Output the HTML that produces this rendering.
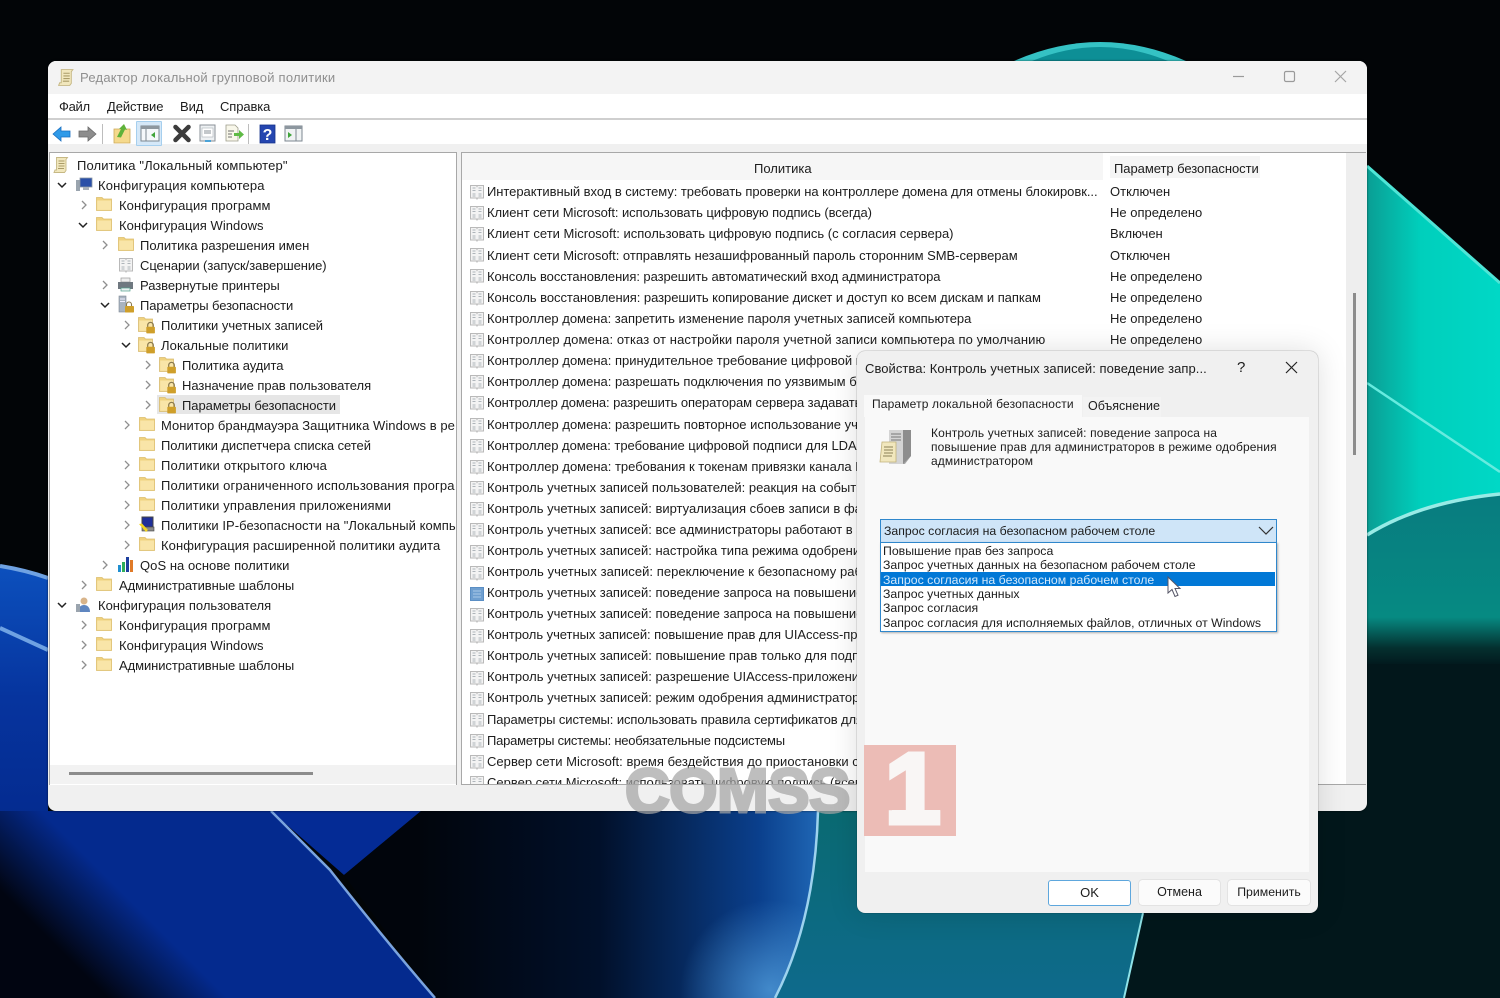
<!DOCTYPE html>
<html lang="ru"><head><meta charset="utf-8"><title>Редактор локальной групповой политики</title>
<style>
html,body{margin:0;padding:0;background:#020507}
body{width:1500px;height:998px;position:relative;overflow:hidden;font:13px/20px "Liberation Sans",sans-serif;color:#1c1c1c}
.a,.a>*{position:absolute}
.t{position:absolute;white-space:nowrap;height:20px;line-height:20px}
.i{position:absolute;width:16px;height:16px}
.c{position:absolute;width:10px;height:10px}
.s{font-size:12.300px}
</style></head><body>
<svg width="0" height="0" style="position:absolute">
<defs>
<symbol id="fo" viewBox="0 0 16 16"><path d="M.5 14.500V1.500h5.500l1.500 1.500h8v11.500z" fill="#f0d27f" stroke="#dcbd6c" stroke-width=".8"/><path d="M1.200 4.500h13.800v9.400H1.200z" fill="#f9e5a8"/></symbol>
<symbol id="lk" viewBox="0 0 18 18"><path d="M.5 15.500V1.500h5.500l1.500 1.500h7v12.500z" fill="#f0d27f" stroke="#d8bc72" stroke-width=".8"/><path d="M1.200 4.500h12.800v10.300H1.200z" fill="#f9e5a8"/><path d="M9.700 11V9.200a2.800 2.800 0 0 1 5.600 0V11" fill="none" stroke="#8a7a50" stroke-width="1.200"/><rect x="8.300" y="10.800" width="8.600" height="6.600" rx=".8" fill="#cf9f2a"/></symbol>
<symbol id="chr" viewBox="0 0 10 10"><path d="M3 1l4 4-4 4" fill="none" stroke="#8f8f8f" stroke-width="1.300"/></symbol>
<symbol id="chd" viewBox="0 0 10 10"><path d="M1 3l4 4 4-4" fill="none" stroke="#222" stroke-width="1.500"/></symbol>
<symbol id="pg" viewBox="0 0 16 16"><path d="M1.500 1.500h6l.5 1 .5-1h6v12.500h-6l-.5 1-.5-1h-6z" fill="#f3f3f3" stroke="#b9b9b9"/><path d="M3.500 4h3M3.500 6.500h3M9.500 4h3M9.500 6.500h3M3.500 10h3M9.500 10h3M3.500 12h3M9.500 12h3" stroke="#aeb4ba" stroke-width="1.100"/></symbol>
<symbol id="pb" viewBox="0 0 16 16"><path d="M1.500 1.500h13v13h-13z" fill="#6f9fd0" stroke="#5a8ec4"/><path d="M4 5h8M4 8h8M4 11h8" stroke="#a8c8e8"/></symbol>
<symbol id="sc" viewBox="0 0 16 18"><path d="M4 1.500h11l-1.500 2v11l-1.500 2H1.500l1-2.500h1.500z" fill="#f1e7bd" stroke="#c6b884" stroke-width=".9"/><path d="M6 5h6M6 7.500h6M6 10h6M5.500 12.500h6" stroke="#a99b68"/></symbol>
</defs></svg>

<!-- wallpaper -->
<svg class="a" style="left:0;top:0" width="1500" height="998" viewBox="0 0 1500 998">
<defs>
<linearGradient id="gT" x1="1367" y1="0" x2="1500" y2="0" gradientUnits="userSpaceOnUse"><stop offset="0" stop-color="#0a9e94"/><stop offset=".4" stop-color="#00cfbc"/><stop offset="1" stop-color="#00d8c6"/></linearGradient>
<linearGradient id="gD" x1="0" y1="494" x2="0" y2="665" gradientUnits="userSpaceOnUse"><stop offset="0" stop-color="#087c80"/><stop offset=".72" stop-color="#068a82"/><stop offset=".9" stop-color="#04302f"/><stop offset="1" stop-color="#02191d"/></linearGradient>
<linearGradient id="gB" x1="30" y1="920" x2="90" y2="860" gradientUnits="userSpaceOnUse"><stop offset="0" stop-color="#010511"/><stop offset="1" stop-color="#042a8e"/></linearGradient>
<linearGradient id="gM" x1="420" y1="0" x2="818" y2="0" gradientUnits="userSpaceOnUse"><stop offset="0" stop-color="#01050c"/><stop offset=".45" stop-color="#01102a"/><stop offset=".85" stop-color="#0a3f8c"/><stop offset="1" stop-color="#1f66b4"/></linearGradient>
<linearGradient id="gL" x1="0" y1="566" x2="0" y2="830" gradientUnits="userSpaceOnUse"><stop offset="0" stop-color="#0c50bd"/><stop offset=".5" stop-color="#06349e"/><stop offset="1" stop-color="#042a8e"/></linearGradient>
<linearGradient id="gC" x1="0" y1="811" x2="0" y2="998" gradientUnits="userSpaceOnUse"><stop offset="0" stop-color="#0a6a72"/><stop offset="1" stop-color="#0e6a8c"/></linearGradient>
<radialGradient id="gP" cx="770" cy="990" r="90" gradientUnits="userSpaceOnUse"><stop offset="0" stop-color="#4f9ad8" stop-opacity=".8"/><stop offset="1" stop-color="#4f9ad8" stop-opacity="0"/></radialGradient>
</defs>
<rect width="1500" height="998" fill="#020507"/>
<rect y="640" x="900" width="600" height="358" fill="#02171b"/>
<path d="M1014 61Q1100 23 1186 61z" fill="#35c2c4"/>
<path d="M1032 61Q1100 33 1168 61z" fill="#0d8f96"/>
<path d="M1367 166L1500 283V998H1367z" fill="url(#gT)"/>
<path d="M1367 535Q1420 502 1500 494V680H1367z" fill="url(#gD)"/>
<rect x="1367" y="664" width="133" height="334" fill="#02171b"/>
<path d="M1367 166L1500 283" stroke="#4fe5d6" stroke-width="3" fill="none"/>
<path d="M1367 383L1500 472" stroke="#66ebdf" stroke-width="2.500" fill="none"/>
<path d="M1367 535Q1420 502 1500 494" stroke="#98ebe6" stroke-width="3.500" fill="none"/>
<path d="M0 566L48 578V820H0z" fill="url(#gL)"/>
<path d="M0 566Q25 570 48 578" stroke="#6fa2e2" stroke-width="4" fill="none"/>
<path d="M0 628L48 650" stroke="#6fa2e2" stroke-width="4" fill="none"/>
<path d="M0 811H271L330 870L435 998H0z" fill="url(#gB)"/>
<path d="M271 811H421L344 875z" fill="#042b95"/>
<path d="M344 875L421 811H818Q815 920 775 998H435z" fill="url(#gM)"/>
<path d="M344 875L421 811H818Q815 920 775 998H435z" fill="url(#gP)"/>
<path d="M818 811Q815 920 775 998H1124L1143 913H1100V811z" fill="url(#gC)"/>
<path d="M271 811L330 870Q385 940 435 998" stroke="#7aa3de" stroke-width="2.500" fill="none"/>
<path d="M818 811Q815 920 775 998" stroke="#9dd2ee" stroke-width="2.500" fill="none"/>
<path d="M1143 913L1124 998" stroke="#8fe3e8" stroke-width="2" fill="none"/>
</svg>

<!-- main window -->
<div class="a" style="left:48px;top:61px;width:1319px;height:750px;background:#f0f0f0;border-radius:8px;overflow:hidden;box-shadow:0 0 2px rgba(0,0,0,.6)"></div>
<div class="a" style="left:48px;top:61px;width:1319px;height:33px;background:#f3f3f3;border-radius:8px 8px 0 0"></div>
<svg class="i" style="left:57px;top:68px;width:17px;height:19px"><use href="#sc"/></svg>
<div class="t" style="left:80px;top:68px;color:#8f8f8f;letter-spacing:.23px">Редактор локальной групповой политики</div>
<svg class="a" style="left:1225px;top:66px" width="130" height="20"><path d="M8 10.500h11" stroke="#9a9a9a" stroke-width="1.200"/><rect x="59.500" y="5.500" width="10" height="10" rx="1.500" fill="none" stroke="#9a9a9a" stroke-width="1.200"/><path d="M110 5l11 11M121 5l-11 11" stroke="#a5a5a5" stroke-width="1.200"/></svg>

<div class="a" style="left:48px;top:94px;width:1319px;height:24px;background:#fff"></div>
<div class="t" style="left:59px;top:97px;letter-spacing:-.3px">Файл</div>
<div class="t" style="left:107px;top:97px;letter-spacing:-.1px">Действие</div>
<div class="t" style="left:180px;top:97px;letter-spacing:-.1px">Вид</div>
<div class="t" style="left:220px;top:97px;letter-spacing:-.1px">Справка</div>
<div class="a" style="left:48px;top:118px;width:1319px;height:2px;background:#cfcfcf"></div>
<div class="a" style="left:48px;top:120px;width:1319px;height:24px;background:#fff"></div>

<!-- toolbar -->
<div class="a" style="left:136px;top:121px;width:24px;height:23px;background:#d5e8f8;border:1px solid #a6cfee;border-radius:1px"></div>
<svg class="a" style="left:50px;top:120px" width="260" height="26" viewBox="0 0 260 26">
<path d="M3 14l8-7v4h9v6h-9v4z" fill="#2f9ae8" stroke="#1a6fc0" stroke-width=".8"/>
<path d="M46 14l-8-7v4h-9v6h9v4z" fill="#8d8d8d" stroke="#6a6a6a" stroke-width=".8"/>
<path d="M52.500 4v20" stroke="#bdbdbd"/>
<path d="M64 9h16v14H64z" fill="#f5d98c" stroke="#cba95a" stroke-width=".8"/>
<path d="M67 17l4-8-2 0 5-5 3 6-2-.5-4 8z" fill="#5fb23a"/>
<rect x="91" y="6" width="18" height="15" fill="#f4f8fb" stroke="#7d8790"/><rect x="91" y="6" width="18" height="3" fill="#8d979f"/><path d="M96 9v12" stroke="#7d8790"/><path d="M105 12v6l-4-3z" fill="#3fa43a"/>
<path d="M125.500 7l13 13M138.500 7l-13 13" stroke="#3c3c3c" stroke-width="4.500" stroke-linecap="round"/>
<rect x="150" y="5" width="15" height="16" fill="#eef1f3" stroke="#8a9097"/><rect x="152" y="8" width="11" height="9" fill="#fff" stroke="#a8b0b6" stroke-width=".6"/><path d="M154 11h7M154 13h7" stroke="#8a9097"/><rect x="155" y="20" width="6" height="2" fill="#4aa3d8"/>
<path d="M176 5h9l3 3v13h-12z" fill="#f8f7ea" stroke="#9c9c8a" stroke-width=".8"/><path d="M178 11h6M178 14h4M178 17h4" stroke="#6f6f6f"/><path d="M184 13h5v-3l5 4.500-5 4.500v-3h-5z" fill="#5fba45"/>
<path d="M198.500 4v20" stroke="#bdbdbd"/>
<rect x="210" y="5" width="15" height="18" fill="#2546b0" stroke="#15318a" stroke-width=".8"/>
<text x="217.500" y="20" text-anchor="middle" font-family="Liberation Sans" font-weight="700" font-size="16" fill="#fff">?</text>
<rect x="235" y="6" width="17" height="15" fill="#f0f3f4" stroke="#7d8790"/><rect x="235" y="6" width="17" height="3" fill="#8d979f"/><path d="M246 9v12" stroke="#7d8790"/><path d="M238 12v6l4-3z" fill="#3fa43a"/>
</svg>

<!-- left tree -->
<div class="a" style="left:49px;top:152px;width:406px;height:632px;background:#fff;border:1px solid #a8a8a8;border-bottom:0;overflow:hidden"></div>
<div class="a" style="left:50px;top:765px;width:406px;height:19px;background:#f2f2f2"></div>
<div class="a" style="left:69px;top:772px;width:244px;height:3px;background:#8c8c8c"></div>
<div class="a" style="left:157px;top:395px;width:183px;height:19px;background:#e6e6e6"></div>

<div class="a" id="tree" style="left:0;top:0;width:456px;height:700px;overflow:hidden">
<svg class="i" style="left:52px;top:156px;width:17px;height:18px"><use href="#sc"/></svg><div class="t" style="left:77px;top:156px;letter-spacing:.13px">Политика "Локальный компьютер"</div>
<svg class="c" style="left:57px;top:180px"><use href="#chd"/></svg>
<svg class="i" style="left:75px;top:176px;width:18px;height:17px" viewBox="0 0 18 17"><rect x="1" y="4" width="4" height="11" fill="#9aa4ae"/><rect x="5" y="2" width="12" height="9" fill="#2a4fa8" stroke="#8a96a3" stroke-width=".8"/><rect x="8" y="11" width="6" height="3" fill="#a8b0ba"/></svg>
<div class="t" style="left:98px;top:176px;letter-spacing:.13px">Конфигурация компьютера</div>

<svg class="c" style="left:79px;top:200px"><use href="#chr"/></svg><svg class="i" style="left:96px;top:196px"><use href="#fo"/></svg><div class="t" style="left:119px;top:196px;letter-spacing:.1px">Конфигурация программ</div>
<svg class="c" style="left:78px;top:220px"><use href="#chd"/></svg><svg class="i" style="left:96px;top:216px"><use href="#fo"/></svg><div class="t" style="left:119px;top:216px;letter-spacing:.05px">Конфигурация Windows</div>
<svg class="c" style="left:100px;top:240px"><use href="#chr"/></svg><svg class="i" style="left:118px;top:236px"><use href="#fo"/></svg><div class="t" style="left:140px;top:236px">Политика разрешения имен</div>
<svg class="i" style="left:118px;top:257px"><use href="#pg"/></svg><div class="t" style="left:140px;top:256px;letter-spacing:-.07px">Сценарии (запуск/завершение)</div>
<svg class="c" style="left:100px;top:280px"><use href="#chr"/></svg>
<svg class="i" style="left:117px;top:277px;width:17px;height:16px" viewBox="0 0 17 16"><rect x="4" y="1" width="9" height="4" fill="#eee" stroke="#999" stroke-width=".7"/><rect x="1" y="5" width="15" height="7" fill="#6f7880"/><rect x="4" y="11" width="9" height="3" fill="#e8f0f0" stroke="#52a08c" stroke-width=".7"/></svg>
<div class="t" style="left:140px;top:276px;letter-spacing:-.05px">Развернутые принтеры</div>
<svg class="c" style="left:100px;top:300px"><use href="#chd"/></svg>
<svg class="i" style="left:118px;top:295px;width:17px;height:18px" viewBox="0 0 17 18"><rect x="1" y="1" width="7" height="16" fill="#a9b4c0" stroke="#7c8894" stroke-width=".6"/><path d="M2 4h5M2 6.500h5" stroke="#eef" stroke-width="1"/><path d="M8.500 11V9.500a2.500 2.500 0 0 1 5 0V11" fill="none" stroke="#8a7a50" stroke-width="1.100"/><rect x="7" y="11" width="9" height="6.500" rx=".8" fill="#cf9f2a"/></svg>
<div class="t" style="left:140px;top:296px;letter-spacing:-.09px">Параметры безопасности</div>

<svg class="c" style="left:122px;top:320px"><use href="#chr"/></svg><svg class="i" style="left:138px;top:316px;width:18px;height:18px"><use href="#lk"/></svg><div class="t" style="left:161px;top:316px">Политики учетных записей</div>
<svg class="c" style="left:121px;top:340px"><use href="#chd"/></svg><svg class="i" style="left:138px;top:336px;width:18px;height:18px"><use href="#lk"/></svg><div class="t" style="left:161px;top:336px;letter-spacing:.1px">Локальные политики</div>
<svg class="c" style="left:143px;top:360px"><use href="#chr"/></svg><svg class="i" style="left:159px;top:356px;width:18px;height:18px"><use href="#lk"/></svg><div class="t" style="left:182px;top:356px;letter-spacing:-.05px">Политика аудита</div>
<svg class="c" style="left:143px;top:380px"><use href="#chr"/></svg><svg class="i" style="left:159px;top:376px;width:18px;height:18px"><use href="#lk"/></svg><div class="t" style="left:182px;top:376px;letter-spacing:-.04px">Назначение прав пользователя</div>
<svg class="c" style="left:143px;top:400px"><use href="#chr"/></svg><svg class="i" style="left:159px;top:396px;width:18px;height:18px"><use href="#lk"/></svg><div class="t" style="left:182px;top:396px;letter-spacing:-.05px">Параметры безопасности</div>

<svg class="c" style="left:122px;top:420px"><use href="#chr"/></svg><svg class="i" style="left:139px;top:416px"><use href="#fo"/></svg><div class="t" style="left:161px;top:416px;letter-spacing:.05px">Монитор брандмауэра Защитника Windows в ре</div>
<svg class="i" style="left:139px;top:436px"><use href="#fo"/></svg><div class="t" style="left:161px;top:436px;letter-spacing:-.06px">Политики диспетчера списка сетей</div>
<svg class="c" style="left:122px;top:460px"><use href="#chr"/></svg><svg class="i" style="left:139px;top:456px"><use href="#fo"/></svg><div class="t" style="left:161px;top:456px;letter-spacing:.2px">Политики открытого ключа</div>
<svg class="c" style="left:122px;top:480px"><use href="#chr"/></svg><svg class="i" style="left:139px;top:476px"><use href="#fo"/></svg><div class="t" style="left:161px;top:476px;letter-spacing:.14px">Политики ограниченного использования програ</div>
<svg class="c" style="left:122px;top:500px"><use href="#chr"/></svg><svg class="i" style="left:139px;top:496px"><use href="#fo"/></svg><div class="t" style="left:161px;top:496px;letter-spacing:.15px">Политики управления приложениями</div>
<svg class="c" style="left:122px;top:520px"><use href="#chr"/></svg>
<svg class="i" style="left:138px;top:516px;width:17px;height:17px" viewBox="0 0 17 17"><rect x="4" y="1" width="11" height="10" fill="#1f2f9a" stroke="#444" stroke-width="1"/><rect x="4" y="11" width="12" height="4" fill="#8a8a8a" stroke="#444" stroke-width=".6"/><path d="M1 8l3-.5L10 14l-2 2z" fill="#f2d41f"/></svg>
<div class="t" style="left:161px;top:516px;letter-spacing:.05px">Политики IP-безопасности на "Локальный компь</div>
<svg class="c" style="left:122px;top:540px"><use href="#chr"/></svg><svg class="i" style="left:139px;top:536px"><use href="#fo"/></svg><div class="t" style="left:161px;top:536px;letter-spacing:.08px">Конфигурация расширенной политики аудита</div>
<svg class="c" style="left:100px;top:560px"><use href="#chr"/></svg>
<svg class="i" style="left:117px;top:556px;width:18px;height:17px" viewBox="0 0 18 17"><rect x="1" y="9" width="3" height="7" fill="#1f8fd0"/><rect x="5" y="6" width="3" height="10" fill="#2fae5a"/><rect x="9" y="1" width="3" height="15" fill="#1d3f9e"/><rect x="13" y="4" width="3" height="12" fill="#e07a28"/></svg>
<div class="t" style="left:140px;top:556px;letter-spacing:.05px">QoS на основе политики</div>
<svg class="c" style="left:79px;top:580px"><use href="#chr"/></svg><svg class="i" style="left:96px;top:576px"><use href="#fo"/></svg><div class="t" style="left:119px;top:576px;letter-spacing:-.08px">Административные шаблоны</div>
<svg class="c" style="left:57px;top:600px"><use href="#chd"/></svg>
<svg class="i" style="left:75px;top:596px;width:18px;height:17px" viewBox="0 0 18 17"><circle cx="9" cy="5" r="3.500" fill="#d8b48a"/><path d="M3 16c0-5 3-7 6-7s6 2 6 7z" fill="#5f86c0"/><rect x="1" y="8" width="4" height="8" fill="#9aa4ae"/></svg>
<div class="t" style="left:98px;top:596px">Конфигурация пользователя</div>
<svg class="c" style="left:79px;top:620px"><use href="#chr"/></svg><svg class="i" style="left:96px;top:616px"><use href="#fo"/></svg><div class="t" style="left:119px;top:616px;letter-spacing:.1px">Конфигурация программ</div>
<svg class="c" style="left:79px;top:640px"><use href="#chr"/></svg><svg class="i" style="left:96px;top:636px"><use href="#fo"/></svg><div class="t" style="left:119px;top:636px;letter-spacing:.05px">Конфигурация Windows</div>
<svg class="c" style="left:79px;top:660px"><use href="#chr"/></svg><svg class="i" style="left:96px;top:656px"><use href="#fo"/></svg><div class="t" style="left:119px;top:656px;letter-spacing:-.08px">Административные шаблоны</div>
</div>

<!-- right list -->
<div class="a" style="left:461px;top:152px;width:905px;height:633px;background:#fff;border:1px solid #a8a8a8;border-right:0;border-bottom:0;box-sizing:border-box;overflow:hidden"></div>
<div class="a" style="left:462px;top:153px;width:641px;height:27px;background:#f6f6f6"></div>
<div class="a" style="left:1110px;top:156px;width:150px;height:22px;background:#f5f5f5"></div>
<div class="t" style="left:754px;top:159px">Политика</div>
<div class="t" style="left:1114px;top:159px;letter-spacing:-.05px">Параметр безопасности</div>
<div class="a" style="left:1346px;top:153px;width:20px;height:632px;background:#eeeeee"></div>
<div class="a" style="left:1353px;top:293px;width:3px;height:162px;background:#8c8c8c"></div>

<div class="a" id="list" style="left:462px;top:182px;width:884px;height:603px;overflow:hidden">
<svg class="i" style="left:7px;top:2px"><use href="#pg"/></svg><div class="t" style="left:25px;top:0px;letter-spacing:-.05px">Интерактивный вход в систему: требовать проверки на контроллере домена для отмены блокировк...</div><div class="t" style="left:648px;top:0px">Отключен</div>
<svg class="i" style="left:7px;top:23px"><use href="#pg"/></svg><div class="t" style="left:25px;top:21px;letter-spacing:-.065px">Клиент сети Microsoft: использовать цифровую подпись (всегда)</div><div class="t" style="left:648px;top:21px">Не определено</div>
<svg class="i" style="left:7px;top:44px"><use href="#pg"/></svg><div class="t" style="left:25px;top:42px">Клиент сети Microsoft: использовать цифровую подпись (с согласия сервера)</div><div class="t" style="left:648px;top:42px">Включен</div>
<svg class="i" style="left:7px;top:65px"><use href="#pg"/></svg><div class="t" style="left:25px;top:64px;letter-spacing:-.025px">Клиент сети Microsoft: отправлять незашифрованный пароль сторонним SMB-серверам</div><div class="t" style="left:648px;top:64px">Отключен</div>
<svg class="i" style="left:7px;top:86px"><use href="#pg"/></svg><div class="t" style="left:25px;top:85px;letter-spacing:-.07px">Консоль восстановления: разрешить автоматический вход администратора</div><div class="t" style="left:648px;top:85px">Не определено</div>
<svg class="i" style="left:7px;top:108px"><use href="#pg"/></svg><div class="t" style="left:25px;top:106px;letter-spacing:-.05px">Консоль восстановления: разрешить копирование дискет и доступ ко всем дискам и папкам</div><div class="t" style="left:648px;top:106px">Не определено</div>
<svg class="i" style="left:7px;top:129px"><use href="#pg"/></svg><div class="t" style="left:25px;top:127px;letter-spacing:-.01px">Контроллер домена: запретить изменение пароля учетных записей компьютера</div><div class="t" style="left:648px;top:127px">Не определено</div>
<svg class="i" style="left:7px;top:150px"><use href="#pg"/></svg><div class="t" style="left:25px;top:148px;letter-spacing:.1px">Контроллер домена: отказ от настройки пароля учетной записи компьютера по умолчанию</div><div class="t" style="left:648px;top:148px">Не определено</div>
<svg class="i" style="left:7px;top:171px"><use href="#pg"/></svg><div class="t" style="left:25px;top:169px">Контроллер домена: принудительное требование цифровой подписи</div>
<svg class="i" style="left:7px;top:192px"><use href="#pg"/></svg><div class="t" style="left:25px;top:190px">Контроллер домена: разрешать подключения по уязвимым безопасным каналам</div>
<svg class="i" style="left:7px;top:213px"><use href="#pg"/></svg><div class="t" style="left:25px;top:211px;letter-spacing:-.1px">Контроллер домена: разрешить операторам сервера задавать задания</div>
<svg class="i" style="left:7px;top:235px"><use href="#pg"/></svg><div class="t" style="left:25px;top:233px">Контроллер домена: разрешить повторное использование учетной записи</div>
<svg class="i" style="left:7px;top:256px"><use href="#pg"/></svg><div class="t" style="left:25px;top:254px;letter-spacing:-.03px">Контроллер домена: требование цифровой подписи для LDAP-сервера</div>
<svg class="i" style="left:7px;top:277px"><use href="#pg"/></svg><div class="t" style="left:25px;top:275px">Контроллер домена: требования к токенам привязки канала LDAP-сервера</div>
<svg class="i" style="left:7px;top:298px"><use href="#pg"/></svg><div class="t" style="left:25px;top:296px">Контроль учетных записей пользователей: реакция на события</div>
<svg class="i" style="left:7px;top:319px"><use href="#pg"/></svg><div class="t" style="left:25px;top:317px">Контроль учетных записей: виртуализация сбоев записи в файл</div>
<svg class="i" style="left:7px;top:340px"><use href="#pg"/></svg><div class="t" style="left:25px;top:338px">Контроль учетных записей: все администраторы работают в режиме</div>
<svg class="i" style="left:7px;top:362px"><use href="#pg"/></svg><div class="t" style="left:25px;top:359px">Контроль учетных записей: настройка типа режима одобрения</div>
<svg class="i" style="left:7px;top:383px"><use href="#pg"/></svg><div class="t" style="left:25px;top:380px;letter-spacing:.05px">Контроль учетных записей: переключение к безопасному рабочему столу</div>
<svg class="i" style="left:7px;top:404px"><use href="#pb"/></svg><div class="t" style="left:25px;top:401px">Контроль учетных записей: поведение запроса на повышение прав</div>
<svg class="i" style="left:7px;top:425px"><use href="#pg"/></svg><div class="t" style="left:25px;top:422px">Контроль учетных записей: поведение запроса на повышение прав</div>
<svg class="i" style="left:7px;top:446px"><use href="#pg"/></svg><div class="t" style="left:25px;top:443px;letter-spacing:-.05px">Контроль учетных записей: повышение прав для UIAccess-приложений</div>
<svg class="i" style="left:7px;top:467px"><use href="#pg"/></svg><div class="t" style="left:25px;top:464px">Контроль учетных записей: повышение прав только для подписанных</div>
<svg class="i" style="left:7px;top:488px"><use href="#pg"/></svg><div class="t" style="left:25px;top:485px">Контроль учетных записей: разрешение UIAccess-приложениям</div>
<svg class="i" style="left:7px;top:509px"><use href="#pg"/></svg><div class="t" style="left:25px;top:506px">Контроль учетных записей: режим одобрения администратором</div>
<svg class="i" style="left:7px;top:530px"><use href="#pg"/></svg><div class="t" style="left:25px;top:528px;letter-spacing:-.1px">Параметры системы: использовать правила сертификатов для</div>
<svg class="i" style="left:7px;top:551px"><use href="#pg"/></svg><div class="t" style="left:25px;top:549px;letter-spacing:-.23px">Параметры системы: необязательные подсистемы</div>
<svg class="i" style="left:7px;top:572px"><use href="#pg"/></svg><div class="t" style="left:25px;top:570px;letter-spacing:.03px">Сервер сети Microsoft: время бездействия до приостановки сеанса</div>
<svg class="i" style="left:7px;top:593px"><use href="#pg"/></svg><div class="t" style="left:25px;top:591px">Сервер сети Microsoft: использовать цифровую подпись (всегда)</div>
</div>
<div class="a" style="left:461px;top:784px;width:905px;height:1px;background:#a8a8a8"></div>

<!-- watermark COMSS -->
<div class="a" style="left:600px;top:750px;width:257px;height:70px;overflow:hidden">
<div class="t" style="left:25px;top:0;height:70px;line-height:84px;font-size:62px;font-weight:700;color:#a6a6a6;opacity:.72;letter-spacing:-.5px;-webkit-text-stroke:3px #a6a6a6">COMSS</div>
</div>

<!-- dialog -->
<div class="a" style="left:857px;top:351px;width:461px;height:562px;background:#f0f0f0;border-radius:8px;box-shadow:0 0 30px rgba(0,0,0,.13),0 0 1px rgba(0,0,0,.6)"></div>
<div class="t" style="left:865px;top:359px;letter-spacing:.05px">Свойства: Контроль учетных записей: поведение запр...</div>
<div class="t" style="left:1237px;top:358px;font-size:15px">?</div>
<svg class="a" style="left:1285px;top:361px" width="13" height="13"><path d="M1 1l11 11M12 1L1 12" stroke="#222" stroke-width="1.200"/></svg>
<div class="a" style="left:865px;top:417px;width:444px;height:455px;background:#f9f9f9"></div>
<div class="a" style="left:864px;top:395px;width:218px;height:22px;background:#f9f9f9"></div>
<div class="t" style="left:872px;top:394px;font-size:12px;letter-spacing:.15px">Параметр локальной безопасности</div>
<div class="a" style="left:1083px;top:397px;width:78px;height:20px;background:#f3f3f3"></div>
<div class="t" style="left:1088px;top:396px;font-size:12.500px">Объяснение</div>
<svg class="a" style="left:879px;top:428px" width="36" height="38" viewBox="0 0 36 38"><path d="M10 2h22v26l-6 8H10z" fill="#a9a9a9"/><path d="M10 2h14v34H10z" fill="#d4d4d4"/><path d="M12 6h10M12 9h10M12 12h10" stroke="#777"/><path d="M24 2l8 0v26l-8 8z" fill="#8d8d8d"/><path d="M3 14h14v20H1z" fill="#f1e7bd" stroke="#c1b27b" stroke-width=".8"/><path d="M5 19h9M5 22h9M5 25h9M4 28h9" stroke="#8a8058"/></svg>
<div class="t" style="left:931px;top:423px;font-size:12px;letter-spacing:.14px">Контроль учетных записей: поведение запроса на</div>
<div class="t" style="left:931px;top:437px;font-size:12px;letter-spacing:.13px">повышение прав для администраторов в режиме одобрения</div>
<div class="t" style="left:931px;top:451px;font-size:12px;letter-spacing:.13px">администратором</div>

<div class="a" style="left:880px;top:519px;width:395px;height:22px;background:#cfe5f8;border:1px solid #2f87cc"></div>
<div class="t s" style="left:884px;top:521px">Запрос согласия на безопасном рабочем столе</div>
<svg class="a" style="left:1258px;top:525px" width="16" height="11"><path d="M1 2l7 7 7-7" fill="none" stroke="#333" stroke-width="1.200"/></svg>
<div class="a" style="left:880px;top:542px;width:395px;height:88px;background:#fff;border:1px solid #2f87cc;box-sizing:content-box;box-shadow:1px 1px 2px rgba(0,0,0,.3)"></div>
<div class="a" style="left:881px;top:572px;width:394px;height:14px;background:#0178d6"></div>
<div class="t s" style="left:883px;top:541px">Повышение прав без запроса</div>
<div class="t s" style="left:883px;top:555px">Запрос учетных данных на безопасном рабочем столе</div>
<div class="t s" style="left:883px;top:570px;color:#d2e8fb">Запрос согласия на безопасном рабочем столе</div>
<div class="t s" style="left:883px;top:584px">Запрос учетных данных</div>
<div class="t s" style="left:883px;top:598px">Запрос согласия</div>
<div class="t s" style="left:883px;top:613px">Запрос согласия для исполняемых файлов, отличных от Windows</div>
<svg class="a" style="left:1166px;top:576px" width="16" height="23" viewBox="0 0 16 23"><path d="M2 1v16l4-3.500 3 7 3-1.300-3-6.700h5z" fill="#fff" stroke="#556" stroke-width="1"/></svg>

<!-- red logo -->
<div class="a" style="left:864px;top:745px;width:92px;height:91px;background:#ecbcb6;overflow:hidden">
<div class="t" style="left:21px;top:-2px;height:91px;line-height:92px;font-size:100px;font-weight:700;color:#f9f6f5;-webkit-text-stroke:5px #f9f6f5">1</div>
<div style="left:28px;top:65px;width:48px;height:15px;background:#f9f6f5"></div>
</div>

<div class="a" style="left:1048px;top:880px;width:81px;height:24px;background:#fff;border:1px solid #5ea7dd;border-radius:3px;text-align:center;line-height:24px">OK</div>
<div class="a" style="left:1139px;top:880px;width:81px;height:25px;background:#fbfbfb;border-radius:3px;box-shadow:0 0 1px rgba(0,0,0,.35);text-align:center;line-height:25px;font-size:12.500px">Отмена</div>
<div class="a" style="left:1228px;top:880px;width:82px;height:25px;background:#fbfbfb;border-radius:3px;box-shadow:0 0 1px rgba(0,0,0,.35);text-align:center;line-height:25px;font-size:12.300px">Применить</div>
</body></html>
